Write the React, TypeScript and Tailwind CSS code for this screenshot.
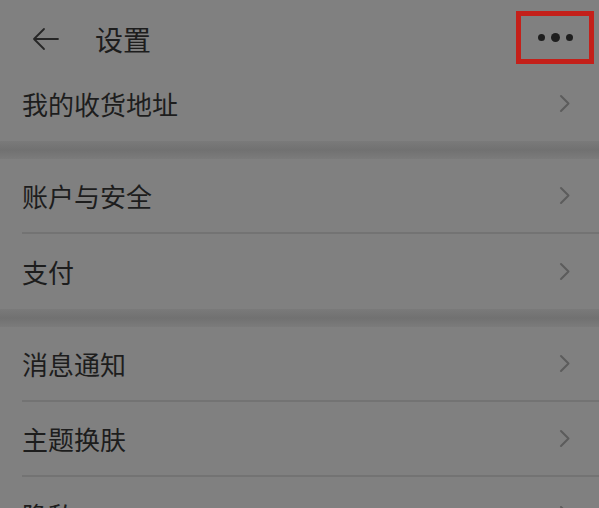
import React from "react";

type Row = { label: string };

const groups: Row[][] = [
  [{ label: "我的收货地址" }],
  [{ label: "账户与安全" }, { label: "支付" }],
  [{ label: "消息通知" }, { label: "主题换肤" }, { label: "隐私" }],
];

function Chevron() {
  return (
    <svg width="12" height="19" viewBox="0 0 12 19" fill="none" className="shrink-0">
      <path d="M2 2 L9.5 9.5 L2 17" stroke="#5c5c5c" strokeWidth="2" strokeLinecap="round" strokeLinejoin="round" />
    </svg>
  );
}

function SettingRow({ label, last }: { label: string; last: boolean }) {
  return (
    <div className="pl-[22px]">
      <div
        className={`h-[75px] flex items-center justify-between pr-[28px] ${
          last ? "" : "border-b-2 border-[#737373]"
        }`}
      >
        <span className="text-[26px] leading-none text-[#1d1d1d]">{label}</span>
        <Chevron />
      </div>
    </div>
  );
}

export default function App() {
  return (
    <div
      className="w-[599px] h-[508px] overflow-hidden bg-[#808080]"
      style={{ fontFamily: '"Noto Sans CJK SC", "Noto Sans", sans-serif' }}
    >
      {/* Header */}
      <div className="h-[66px] flex items-center justify-between pl-[32px] pr-[5px] pt-[10px] pb-[2px]">
        <div className="flex items-center gap-[36px] mt-[3px]">
          <svg width="27" height="24" viewBox="0 0 27 24" fill="none">
            <path d="M26 12 H2 M12 2 L2 12 L12 22" stroke="#262626" strokeWidth="1.8" strokeLinecap="round" strokeLinejoin="round" />
          </svg>
          <span className="text-[28px] leading-none text-[#1d1d1d]">设置</span>
        </div>
        <div className="w-[78px] h-[53px] border-[5px] border-[#c4201a] flex items-center justify-center gap-[6px]">
          <span className="w-[7px] h-[7px] rounded-full bg-[#1e1e1e]" />
          <span className="w-[9px] h-[9px] rounded-full bg-[#1e1e1e]" />
          <span className="w-[7px] h-[7px] rounded-full bg-[#1e1e1e]" />
        </div>
      </div>

      {groups.map((group, gi) => (
        <div key={gi}>
          {gi > 0 && (
            <div className="h-[18px] bg-gradient-to-b from-[#7a7a7a] via-[#717171] to-[#7b7b7b]" />
          )}
          {group.map((row, ri) => (
            <SettingRow key={row.label} label={row.label} last={ri === group.length - 1} />
          ))}
        </div>
      ))}
    </div>
  );
}
